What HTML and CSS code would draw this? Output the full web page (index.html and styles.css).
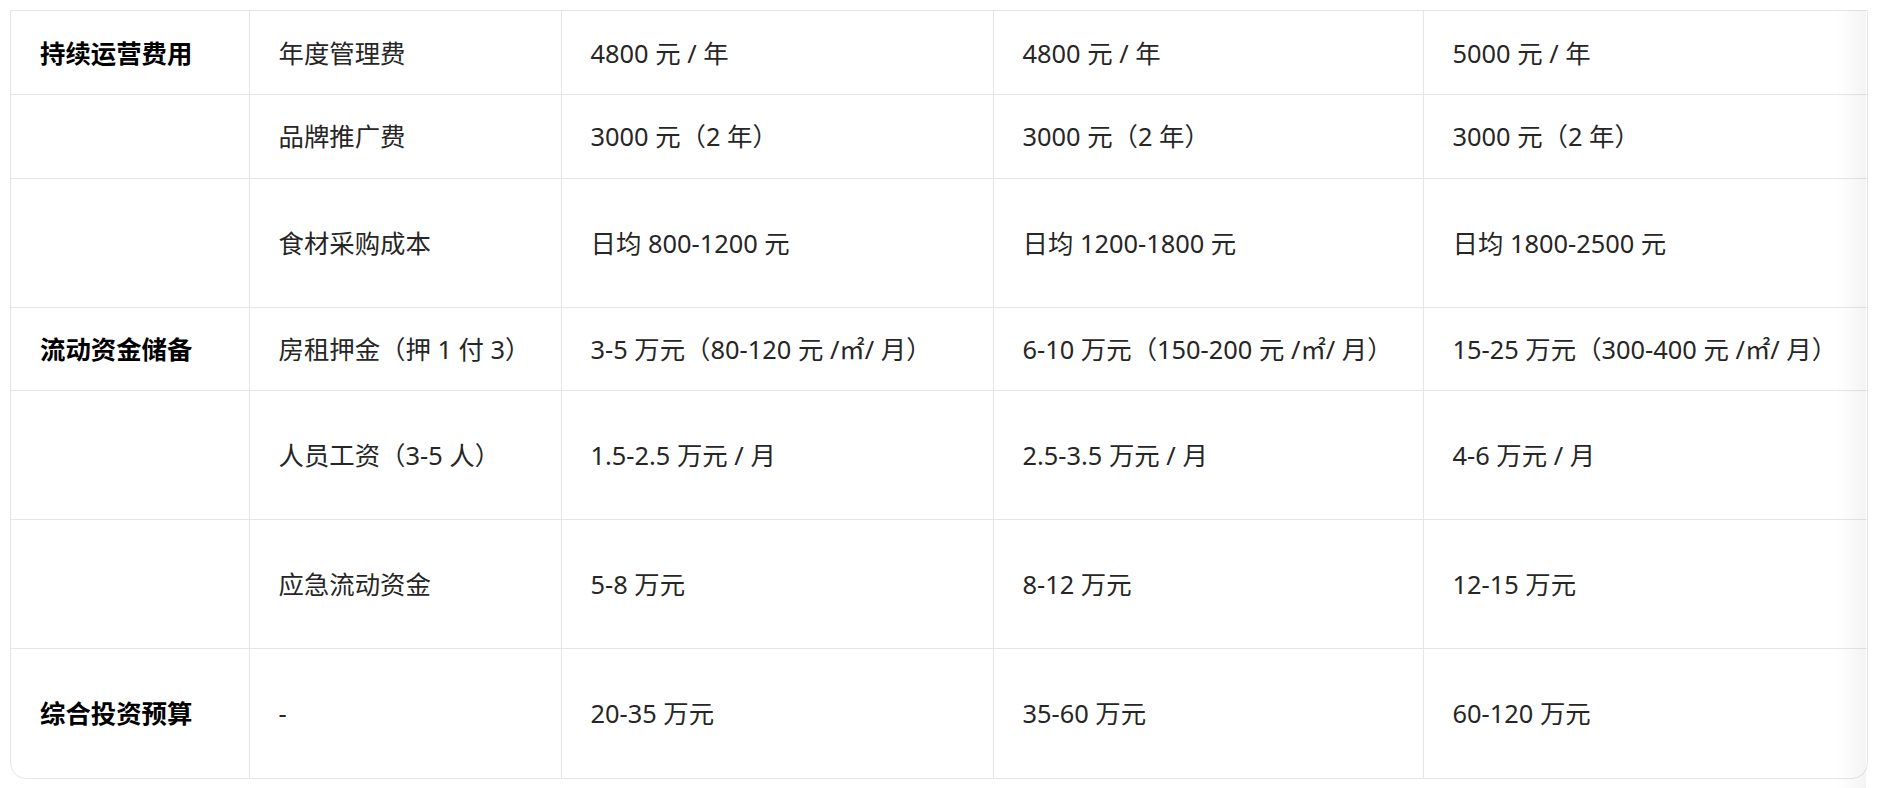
FILE: index.html
```html
<!DOCTYPE html>
<html lang="zh-CN">
<head>
<meta charset="utf-8">
<link rel="stylesheet" href="styles.css">
</head>
<body>
<div class="scroll">
  <div class="wrap">
    <table class="cost">
      <colgroup>
        <col class="c1"><col class="c2"><col class="c3"><col class="c4"><col class="c5">
      </colgroup>
      <tbody>
        <tr>
          <td class="cat">持续运营费用</td>
          <td>年度管理费</td>
          <td>4800 元 / 年</td>
          <td>4800 元 / 年</td>
          <td>5000 元 / 年</td>
        </tr>
        <tr>
          <td class="cat"></td>
          <td>品牌推广费</td>
          <td>3000 元（2 年）</td>
          <td>3000 元（2 年）</td>
          <td>3000 元（2 年）</td>
        </tr>
        <tr class="tall">
          <td class="cat"></td>
          <td>食材采购成本</td>
          <td>日均 800-1200 元</td>
          <td>日均 1200-1800 元</td>
          <td>日均 1800-2500 元</td>
        </tr>
        <tr>
          <td class="cat">流动资金储备</td>
          <td>房租押金（押 1 付 3）</td>
          <td>3-5 万元（80-120 元 /㎡/ 月）</td>
          <td>6-10 万元（150-200 元 /㎡/ 月）</td>
          <td>15-25 万元（300-400 元 /㎡/ 月）</td>
        </tr>
        <tr class="tall">
          <td class="cat"></td>
          <td>人员工资（3-5 人）</td>
          <td>1.5-2.5 万元 / 月</td>
          <td>2.5-3.5 万元 / 月</td>
          <td>4-6 万元 / 月</td>
        </tr>
        <tr class="tall">
          <td class="cat"></td>
          <td>应急流动资金</td>
          <td>5-8 万元</td>
          <td>8-12 万元</td>
          <td>12-15 万元</td>
        </tr>
        <tr class="tall last">
          <td class="cat">综合投资预算</td>
          <td>-</td>
          <td>20-35 万元</td>
          <td>35-60 万元</td>
          <td>60-120 万元</td>
        </tr>
      </tbody>
    </table>
  </div>
  <div class="fade"></div>
</div>
</body>
</html>
```

FILE: styles.css
```css
html, body {
  margin: 0;
  padding: 0;
  background: #ffffff;
}
body {
  padding: 10px 0 0 10px;
  font-family: "Noto Sans", "Noto Sans CJK SC", sans-serif;
  color: #262626;
}
.scroll {
  position: relative;
  width: 1858px;
  height: 778px;
}
.wrap {
  width: 1856px;
  border: 1px solid #e6e6e6;
  border-radius: 0 0 16px 16px;
  overflow: hidden;
}
.cost {
  border-collapse: collapse;
  table-layout: fixed;
  width: 1856px;
  font-size: 25.4px;
  line-height: 36px;
}
.c1 { width: 238px; }
.c2 { width: 312px; }
.c3 { width: 432px; }
.c4 { width: 430px; }
.c5 { width: 444px; }
.cost td {
  height: 83.5px;
  padding: 0 29px;
  box-sizing: border-box;
  border-right: 1px solid #e6e6e6;
  border-bottom: 1px solid #e6e6e6;
  vertical-align: middle;
  white-space: nowrap;
  text-align: left;
}
.cost tr.tall td { height: 129px; }
.cost tr.last td { border-bottom: none; }
.cost td.cat {
  font-weight: 700;
  color: #000;
}
.fade {
  position: absolute;
  top: 0;
  right: 2px;
  width: 30px;
  height: 778px;
  background: linear-gradient(to right, rgba(0,0,0,0), rgba(0,0,0,0.045));
  pointer-events: none;
}
```
